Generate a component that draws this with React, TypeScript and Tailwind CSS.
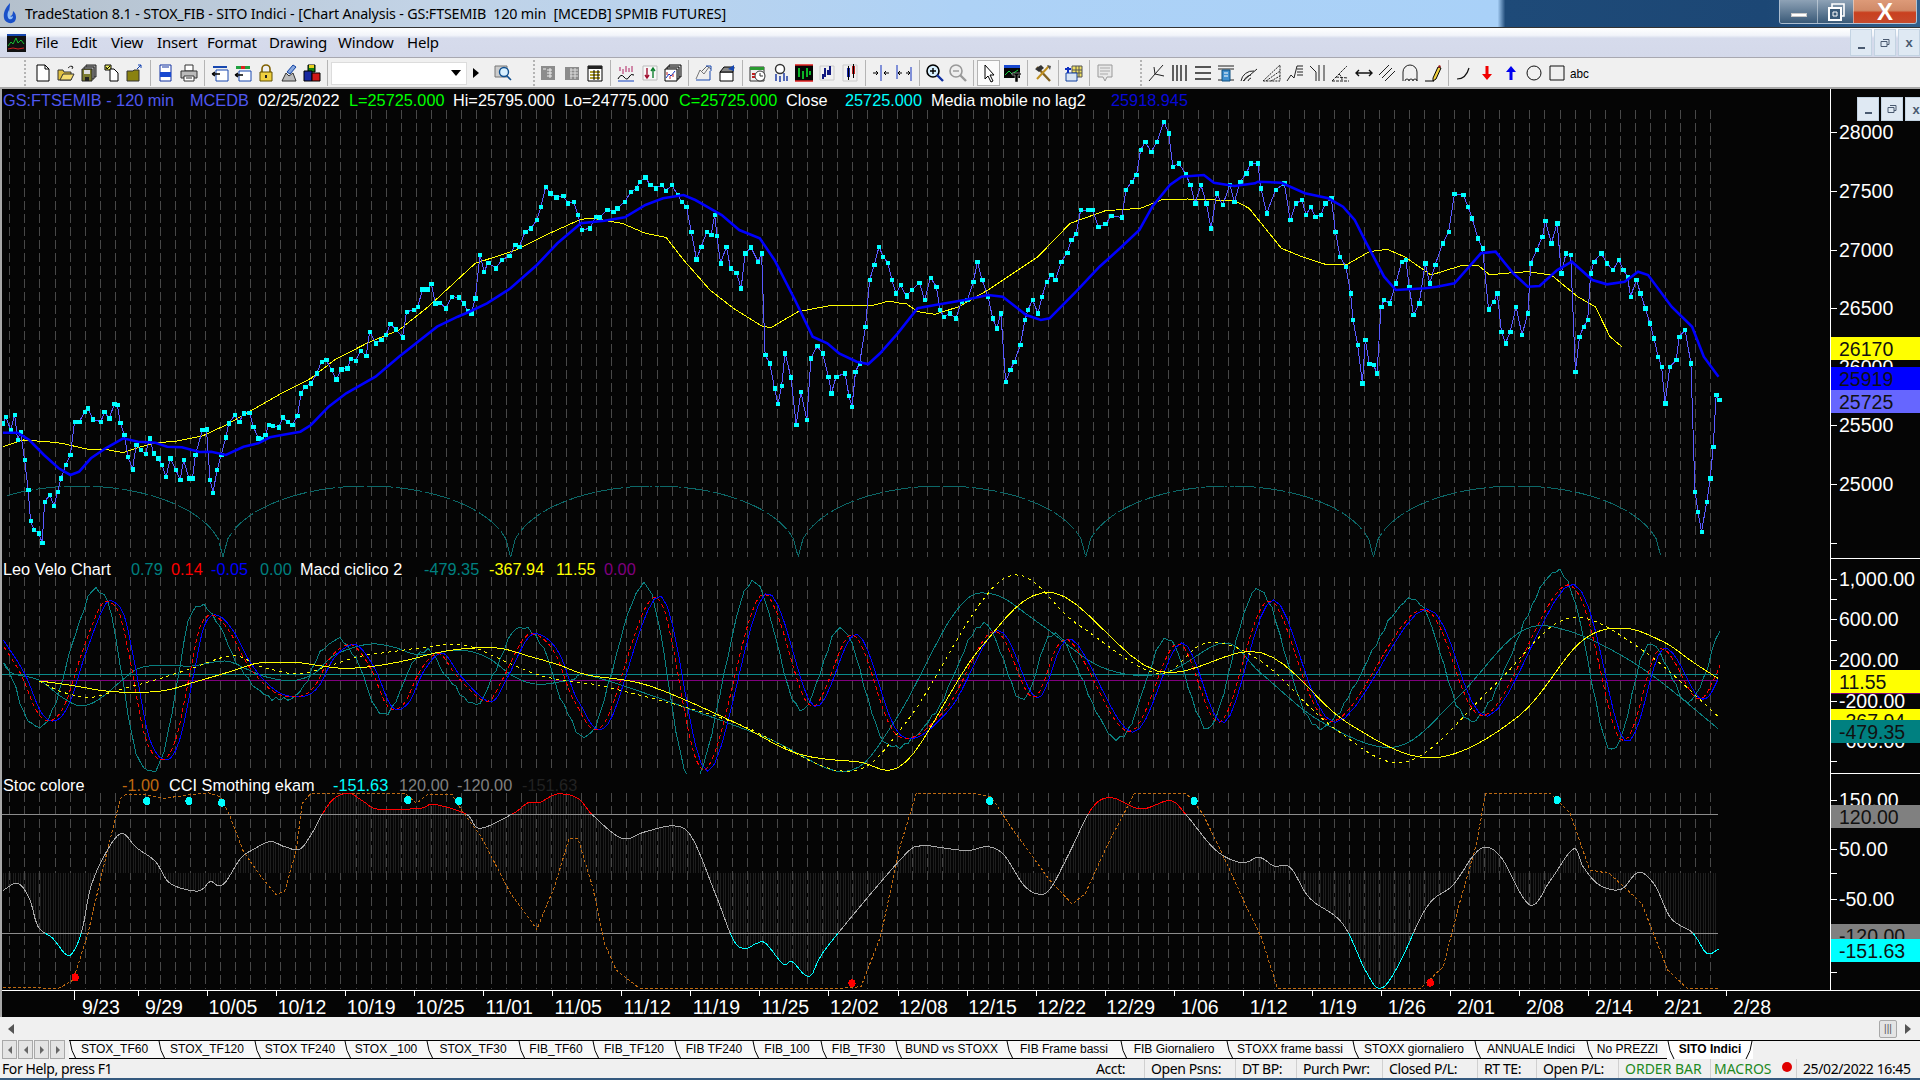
import type { ReactNode } from 'react';

type Pt = [number, number];

const parse = (s: string, f: (x: number, y: number) => Pt): Pt[] =>
  s.trim().split(/\s+/).map((p) => {
    const [x, y] = p.split(',').map(Number);
    return f(x, y);
  });

// crops of the reference are stretched differently, so each has its own mapping
const top1 = (x: number, y: number): Pt => [x / 1.7043, 100 + y / 3];
const top2 = (x: number, y: number): Pt => [900 + x / 1.7043, 100 + y / 3];
const low1 = (x: number, y: number): Pt => [x / 1.7043, 770 + y / 3];
const low2 = (x: number, y: number): Pt => [900 + x / 1.537, 770 + y / 3];
const mid1 = (x: number, y: number): Pt => [x / 2.45, 540 + y / 3];
const disp = (x: number, y: number): Pt => [x * 1.2245, y * 1.2245];

const line = (p: Pt[]) => p.map(([x, y], i) => `${i ? 'L' : 'M'}${x.toFixed(1)} ${y.toFixed(1)}`).join('');

function dense(p: Pt[]): Pt[] {
  const out: Pt[] = [];
  for (let i = 0; i < p.length - 1; i++) {
    const a = p[Math.max(0, i - 1)], b = p[i], c = p[i + 1], d = p[Math.min(p.length - 1, i + 2)];
    for (let k = 0; k < 8; k++) {
      const t = k / 8, t2 = t * t, t3 = t2 * t;
      const f = (j: 0 | 1) =>
        0.5 * (2 * b[j] + (c[j] - a[j]) * t + (2 * a[j] - 5 * b[j] + 4 * c[j] - d[j]) * t2 + (3 * b[j] - a[j] - 3 * c[j] + d[j]) * t3);
      out.push([f(0), f(1)]);
    }
  }
  out.push(p[p.length - 1]);
  return out;
}

function at(p: Pt[], x: number) {
  if (x <= p[0][0]) return p[0][1];
  for (let i = 1; i < p.length; i++) {
    if (p[i][0] >= x) {
      const d = p[i][0] - p[i - 1][0] || 1;
      return p[i - 1][1] + ((x - p[i - 1][0]) / d) * (p[i][1] - p[i - 1][1]);
    }
  }
  return p[p.length - 1][1];
}

const price: Pt[] = [
  ...parse(`5,970 10,950 18,990 25,945 30,1020 35,995 42,1080 48,1170 52,1262 58,1290 66,1300 72,1328 76,1205 85,1185 92,1218 98,1175 104,1135 112,1095 120,1065 127,965 135,965 145,935 150,925 158,958 172,965 178,935 186,955 195,912 200,915 205,968 212,1005 218,1070 226,1108 232,1035 240,1050 248,1062 255,1015 262,1060 270,1075 276,1095 283,1130 290,1075 300,1110 307,1140 313,1080 322,1135 328,1135 333,1065 345,990 352,988 358,1140 363,1178 370,1110 377,1065 385,1012 390,970 400,945 408,965 415,940 425,938 432,980 440,1015 446,1018 452,1005 458,975 465,978 475,982 482,952 490,965 498,975 507,948 513,880 520,860 530,850 540,820 548,785 556,780 565,810 573,838 582,808 592,805 598,777 606,782 615,752 624,768 630,695 640,730 650,720 658,705 665,672 675,688 686,712 693,635 705,630 712,620 720,568 728,568 735,552 742,610 750,608 760,625 770,590 782,592 790,610 797,632 803,640 810,595 818,465 825,515 832,488 845,505 855,480 868,468 878,435 885,440 895,395 905,385 915,360 922,320 930,260 938,280 948,292 960,288 968,310 978,305 985,345 992,390 1005,385 1015,350 1022,352 1035,330 1045,335 1052,325 1065,305 1075,275 1085,265 1090,245 1100,232 1108,255 1118,265 1128,255 1135,272 1145,255 1155,285 1162,305 1170,320 1178,395 1187,478 1195,440 1205,395 1212,405 1218,345 1222,408 1228,490 1238,440 1245,505 1255,518 1263,565 1270,460 1280,442 1292,485 1298,460 1304,765 1312,790 1320,865 1326,912 1332,858 1338,760 1348,832 1357,975 1365,875 1375,960 1382,775 1393,738 1402,760 1412,830 1417,880 1425,830 1440,820 1447,888 1452,920 1458,815 1465,790 1475,680 1482,540 1490,495 1498,440 1505,470 1513,488 1520,540 1527,580 1535,555 1545,590`, top1),
  ...parse(`12,585 20,570 33,548 42,600 52,533 62,560 68,630 75,650 85,640 95,655 105,605 115,600 125,545 132,485 140,540 150,590 158,655 165,685 172,640 180,845 188,810 195,785 205,735 213,660 218,630 226,600 235,640 242,590 250,545 258,525 265,540 275,485 285,458 292,420 300,402 308,330 320,330 328,330 338,380 350,372 360,348 378,352 385,270 395,245 403,225 410,150 418,125 428,155 438,125 450,65 458,100 465,200 475,190 487,222 495,255 503,310 513,255 522,310 530,385 540,280 550,315 562,255 570,305 580,245 590,220 598,190 610,190 615,265 625,340 640,270 655,250 665,360 675,310 685,300 692,345 700,320 708,350 717,345 725,310 735,295 742,395 750,470 760,500 768,580 772,660 780,735 788,850 793,720 800,792 807,795 813,820 820,620 825,600 835,610 845,550 855,485 862,480 868,560 875,645 885,610 895,490 903,550 912,495 925,430 935,395 945,282 960,285 968,320 975,355 985,415 993,445 1003,628 1012,605 1018,580 1025,695 1032,730 1040,695 1050,620 1060,705 1070,640 1075,490 1085,450 1095,410 1100,362 1110,430 1120,370 1127,520 1135,460 1143,465 1151,815 1158,710 1165,680 1172,660 1177,520 1183,485 1195,460 1205,490 1215,510 1225,480 1233,510 1240,530 1245,590 1255,540 1262,580 1270,625 1278,670 1285,715 1292,770 1298,800 1304,910 1312,800 1323,780 1328,710 1338,690 1348,790 1355,1175 1360,1235 1366,1295 1375,1205 1381,1135 1386,1040 1391,885 1396,900`, top2),
];

const maBlue: Pt[] = [
  ...parse(`5,998 30,998 50,1020 75,1065 100,1105 120,1125 135,1115 155,1075 180,1045 210,1015 235,1025 265,1028 285,1040 310,1042 340,1056 360,1055 385,1065 415,1040 440,1030 460,1012 490,1002 512,995 530,975 560,920 590,880 640,830 680,770 745,680 780,650 800,635 830,610 870,565 915,495 950,430 990,370 1030,362 1065,352 1100,315 1130,295 1165,285 1185,300 1210,325 1230,345 1260,390 1295,415 1320,480 1355,600 1385,710 1410,730 1430,760 1460,785 1480,792 1500,760 1530,700`, top1),
  ...parse(`30,625 60,615 110,600 150,585 175,590 215,645 240,660 255,655 300,575 340,500 375,445 408,390 430,320 460,255 480,230 518,225 535,248 570,258 605,250 610,245 650,248 690,280 730,295 755,320 775,360 795,430 825,530 845,570 895,565 915,560 945,550 990,460 1015,455 1045,520 1070,560 1090,558 1120,510 1145,485 1180,540 1205,553 1235,545 1258,515 1275,525 1315,620 1350,680 1370,770 1395,830`, top2),
];

const maYellow: Pt[] = [
  ...parse(`5,1040 40,1020 80,1025 105,1030 150,1048 180,1048 210,1058 240,1040 270,1027 295,1025 345,1008 385,975 430,930 480,880 530,835 570,780 625,730 680,690 730,620 770,555 810,490 880,450 930,405 990,358 1010,355 1060,370 1100,400 1135,412 1165,480 1210,570 1250,625 1300,680 1315,682 1360,635 1420,615 1490,615 1515,603 1535,610`, top1),
  ...parse(`10,610 30,635 60,643 100,620 150,570 235,470 290,370 350,332 410,325 445,300 490,297 570,302 595,325 650,445 685,470 725,493 760,495 800,455 830,448 860,470 905,525 960,495 985,495 1005,525 1030,520 1070,515 1110,525 1155,590 1185,620 1210,710 1230,740`, top2),
];

const oscBlue: Pt[] = [
  ...parse(`8,300 60,400 100,515 135,542 170,490 210,340 255,200 280,187 305,230 330,370 365,590 405,660 440,600 475,400 500,260 530,225 570,270 620,380 680,455 740,470 780,440 815,360 850,320 880,320 920,390 960,500 1000,490 1040,390 1085,340 1130,410 1200,485 1240,420 1290,300 1325,285 1370,340 1420,490 1490,552`, mid1),
  ...parse(`540,487 578,630 625,485 665,577 700,518 735,600 775,580 815,515 847,570 875,522 925,598 965,525 1000,590 1040,490 1090,590 1165,497 1215,585 1285,477 1327,605 1358,530 1388,570 1403,555 1415,521`, disp),
];

const oscSlow: Pt[] = [
  ...parse(`8,368 30,400 95,420 150,470 195,497 240,480 300,420 340,385 400,375 470,378 550,363 600,385 650,410 715,422 770,400 820,345 900,313 960,320 1030,345 1120,330 1190,350 1260,410 1320,433 1400,420 1470,415`, mid1),
  ...parse(`620,600 690,630 730,590 780,500 810,485 850,510 900,545 950,550 1000,525 1030,550 1080,590 1140,610 1190,570 1240,517 1280,515 1340,545 1403,595`, disp),
];

const yellowSolid: Pt[] = [
  ...parse(`97,423 170,435 260,453 340,457 410,450 480,425 550,400 620,373 660,367 730,368 800,380 850,385 920,378 1000,360 1070,338 1150,325 1225,325 1300,350 1370,375 1440,405`, mid1),
  ...parse(`530,560 600,590 650,615 700,622 740,622 800,530 860,484 945,548 1030,533 1100,590 1170,619 1240,585 1290,525 1325,513 1358,524 1383,541 1403,554`, disp),
];

const yellowDash: Pt[] = [
  ...parse(`97,423 150,455 220,472 290,450 380,420 470,385 570,347 640,380 730,402 800,380 880,350 960,335 1040,322 1100,313 1160,322 1230,360 1320,405 1400,425 1500,445`, mid1),
  ...parse(`600,590 690,630 740,590 820,472 880,510 945,550 985,525 1030,540 1090,595 1150,622 1220,560 1280,505 1340,530 1403,585`, disp),
];

const cci: Pt[] = [
  ...parse(`5,362 30,340 50,385 65,470 90,505 112,553 125,545 140,480 155,350 180,250 207,190 232,232 265,275 290,340 337,363 358,335 372,347 385,335 410,265 430,240 460,215 485,230 510,238 530,195 550,130 570,85 595,70 620,95 645,118 715,115 740,103 795,133 818,175 875,130 900,98 920,97 950,72 985,85 1010,135 1060,205 1100,185 1150,168 1180,205 1220,375 1250,510 1270,535 1290,520 1305,520 1335,583 1350,575 1380,618 1410,530`, low1),
  ...parse(`0,270 30,228 60,232 90,240 110,240 135,230 160,255 190,345 215,373 233,350 260,250 295,115 325,83 370,117 415,92 440,135 485,240 525,278 552,262 575,288 600,293 630,385 680,460 715,600 738,655 765,590 810,410 850,345 880,260 900,232 925,265 968,405 1000,330 1035,237 1050,290 1075,345 1108,358 1135,307 1160,345 1185,445 1218,488 1240,550 1258,537`, low2),
].filter((p, i, a) => i === 0 || p[0] > a[i - 1][0]);

const stoc: Pt[] = [
  ...parse(`5,652 100,655 125,630 150,490 175,300 205,85 215,72 240,72 280,85 320,75 355,68 375,80 390,130 415,245 445,320 470,373 485,365 505,240 515,100 530,70 690,70 710,100 730,72 770,72 790,130 820,200 870,370 915,478 945,350 970,205 985,205 1010,350 1030,520 1050,600 1090,655`, low1),
  ...parse(`-90,655 -60,650 -30,500 0,230 25,70 110,70 140,80 170,170 230,330 265,403 285,370 320,220 360,72 440,70 465,130 495,250 530,400 555,500 580,655 800,655 835,590 860,400 885,230 900,72 1000,70 1030,130 1060,300 1090,310 1140,400 1180,600 1210,655 1258,655`, low2),
];

const cyanDots: Pt[] = [
  ...parse('250,93 322,93 378,98 695,90 782,93', low1),
  ...parse('138,93 452,93 1010,90', low2),
];
const redDots: Pt[] = [low1(128, 622), low1(1452, 640), low2(815, 638)];

const gridXs = Array.from({ length: 114 }, (_, i) => Math.round(1710 - i * 15.05) + 0.5);

function Grid({ y1, y2 }: { y1: number; y2: number }) {
  return (
    <g stroke="#484848" strokeDasharray="9 4">
      {gridXs.map((x) => <line key={x} x1={x} x2={x} y1={y1} y2={y2} />)}
    </g>
  );
}

function Arcs() {
  const P = 287.6, x0 = 223 - P;
  const arcs: string[] = [];
  for (let k = 0; k < 6; k++) {
    const pts: Pt[] = [];
    for (let i = 0; i <= 60; i++) {
      const t = i / 60;
      const x = x0 + (k + t) * P;
      if (x < 3 || x > 1825) continue;
      pts.push([x, 557 - 71 * Math.sqrt(Math.max(0, 1 - (2 * t - 1) ** 2))]);
    }
    if (pts.length) arcs.push(line(pts));
  }
  return <g fill="none" stroke="#0c6868" strokeDasharray="26 3">{arcs.map((d) => <path key={d} d={d} />)}</g>;
}

function AxisText({ y, children, fill = '#fff' }: { y: number; children: string; fill?: string }) {
  return <text x={1839} y={y + 7} fontSize={19.5} fill={fill}>{children}</text>;
}

function Tag({ y, bg, children }: { y: number; bg: string; children: string }) {
  return (
    <g>
      <rect x={1831} y={y} width={89} height={23} fill={bg} />
      <text x={1839} y={y + 18.5} fontSize={19.5} fill="#111">{children}</text>
    </g>
  );
}

function Ticks({ ys }: { ys: number[] }) {
  return <g stroke="#fff">{ys.map((y) => <line key={y} x1={1830} x2={1837} y1={y + 0.5} y2={y + 0.5} />)}</g>;
}

function PricePanel() {
  return (
    <svg viewBox="2 89 1918 470" shapeRendering="crispEdges" className="block w-[1918px] h-[470px] shrink-0">
      <Grid y1={110} y2={557} />
      <Arcs />
      <path d={line(maYellow)} fill="none" stroke="#ffff00" />
      <path d={line(price)} fill="none" stroke="#5a5aff" />
      {price.map(([x, y], i) => <rect key={i} x={x - 2} y={y - 2} width={4.4} height={4.4} fill="#00ffff" />)}
      <path d={line(maBlue)} fill="none" stroke="#0000ff" strokeWidth={2.6} shapeRendering="auto" />
      <line x1={1830.5} x2={1830.5} y1={89} y2={559} stroke="#fff" />
      <Ticks ys={[132, 191, 250, 308, 367, 425, 484, 543]} />
      {[['28000', 132], ['27500', 191], ['27000', 250], ['26500', 308], ['26000', 367], ['25500', 425], ['25000', 484]].map(([t, y]) => (
        <AxisText key={t} y={y as number}>{t as string}</AxisText>
      ))}
      <Tag y={337} bg="#ffff00">26170</Tag>
      <Tag y={367} bg="#0000ff">25919</Tag>
      <Tag y={390} bg="#6666ff">25725</Tag>
      <line x1={1830} x2={1920} y1={558.5} y2={558.5} stroke="#fff" />
    </svg>
  );
}

function MacdPanel() {
  const blue = dense([...oscBlue, [1733, 638]]);
  const blueLine = blue.filter((p) => p[0] <= 1718);
  const xs = Array.from({ length: 430 }, (_, i) => 4 + i * 4);
  const red: Pt[] = xs.map((x) => [x, at(blue, x + 4)]);
  const teal: Pt[] = xs.map((x) => [x, 680 + (at(blue, x + 15) - 680) * 1.15 + Math.sin(x * 0.7) * 1.6 + Math.sin(x * 1.9) * 0.9]);
  return (
    <svg viewBox="2 559 1918 215" shapeRendering="crispEdges" className="block w-[1918px] h-[215px] shrink-0">
      <Grid y1={577} y2={771} />
      <line x1={2} x2={1718} y1={674.5} y2={674.5} stroke="#0a8a8a" />
      <line x1={40} x2={1718} y1={680.5} y2={680.5} stroke="#800080" />
      <path d={line(dense(oscSlow))} fill="none" stroke="#0a8080" />
      <path d={line(teal)} fill="none" stroke="#0a8080" />
      <path d={line(blueLine)} fill="none" stroke="#0000ff" />
      <path d={line(red)} fill="none" stroke="#ff0000" strokeDasharray="4 3" />
      <path d={line(dense(yellowDash))} fill="none" stroke="#ffff00" strokeDasharray="3 4" />
      <path d={line(dense(yellowSolid))} fill="none" stroke="#ffff00" />
      <line x1={1830.5} x2={1830.5} y1={559} y2={774} stroke="#fff" />
      <Ticks ys={[579, 599, 619, 640, 660, 701, 741, 761]} />
      {[['1,000.00', 579], ['600.00', 619], ['200.00', 660], ['-200.00', 701], ['-600.00', 741]].map(([t, y]) => (
        <AxisText key={t} y={y as number}>{t as string}</AxisText>
      ))}
      <Tag y={670} bg="#ffff00">11.55</Tag>
      <line x1={1831} x2={1920} y1={693.5} y2={693.5} stroke="#800080" />
      <Tag y={709} bg="#ffff00">-367.94</Tag>
      <Tag y={720} bg="#008080">-479.35</Tag>
      <line x1={1830} x2={1920} y1={773.5} y2={773.5} stroke="#fff" />
    </svg>
  );
}

function StocPanel() {
  const curve = dense(cci);
  const path = line(curve);
  const hist = Array.from({ length: 686 }, (_, i) => 3 + i * 2.5);
  return (
    <svg viewBox="2 774 1918 216" shapeRendering="crispEdges" className="block w-[1918px] h-[216px] shrink-0">
      <defs>
        <clipPath id="cciHigh"><rect x={0} y={770} width={1830} height={44} /></clipPath>
        <clipPath id="cciMid"><rect x={0} y={814} width={1830} height={119} /></clipPath>
        <clipPath id="cciLow"><rect x={0} y={933} width={1830} height={60} /></clipPath>
      </defs>
      <Grid y1={793} y2={989} />
      <g stroke="#1e1e1e">{hist.map((x) => <line key={x} x1={x} x2={x} y1={873} y2={at(curve, x)} />)}</g>
      <line x1={2} x2={1718} y1={814.5} y2={814.5} stroke="#8c8c8c" />
      <line x1={2} x2={1718} y1={933.5} y2={933.5} stroke="#8c8c8c" />
      <path d={line(stoc)} fill="none" stroke="#c06a10" strokeDasharray="3 2" />
      <path d={path} fill="none" stroke="#ff0000" clipPath="url(#cciHigh)" />
      <path d={path} fill="none" stroke="#a8a8a8" clipPath="url(#cciMid)" />
      <path d={path} fill="none" stroke="#00ffff" clipPath="url(#cciLow)" />
      {cyanDots.map(([x, y]) => <ellipse key={x} cx={x} cy={y} rx={3.6} ry={4} fill="#00ffff" />)}
      {redDots.map(([x, y]) => <ellipse key={x} cx={x} cy={y} rx={3.6} ry={4} fill="#ff0000" />)}
      <line x1={1830.5} x2={1830.5} y1={774} y2={990} stroke="#fff" />
      <Ticks ys={[800, 849, 873, 899, 972]} />
      <AxisText y={800}>150.00</AxisText>
      <AxisText y={849}>50.00</AxisText>
      <AxisText y={899}>-50.00</AxisText>
      <Tag y={805} bg="#808080">120.00</Tag>
      <Tag y={924} bg="#808080">-120.00</Tag>
      <Tag y={939} bg="#00ffff">-151.63</Tag>
    </svg>
  );
}

const dates: [string, number][] = [
  ['9/23', 101], ['9/29', 164],
  ...['10/05', '10/12', '10/19', '10/25', '11/01', '11/05', '11/12', '11/19', '11/25', '12/02', '12/08', '12/15', '12/22', '12/29', '1/06', '1/12', '1/19', '1/26', '2/01', '2/08', '2/14', '2/21', '2/28'].map(
    (d, i): [string, number] => [d, 233 + i * 69.05],
  ),
];

function DateAxis() {
  return (
    <svg viewBox="2 990 1918 27" shapeRendering="crispEdges" className="block w-[1918px] h-[27px] shrink-0">
      <line x1={2} x2={1920} y1={990.5} y2={990.5} stroke="#fff" />
      <line x1={74} x2={74} y1={990} y2={1000} stroke="#fff" />
      {dates.slice(1).map(([d, x]) => (
        <line key={d} x1={Math.round(x - 26) + 0.5} x2={Math.round(x - 26) + 0.5} y1={990} y2={996} stroke="#fff" />
      ))}
      {dates.map(([d, x]) => (
        <text key={d} x={x} y={1014} textAnchor="middle" fontSize={19.5} fill="#fff">{d}</text>
      ))}
    </svg>
  );
}

function MiniButtons({ className }: { className: string }) {
  return (
    <div className={`flex gap-[2px] ${className}`}>
      <div className="w-[22px] h-full bg-[#dfe9f3] border border-[#c3d3e2] flex items-end justify-center pb-[6px]"><div className="w-[7px] h-[2px] bg-[#4a5a70]" /></div>
      <div className="w-[22px] h-full bg-[#dfe9f3] border border-[#c3d3e2] flex items-center justify-center">
        <svg viewBox="0 0 10 10" className="w-[10px] h-[10px]"><path d="M3 1.500h6v5H7M1 3.500h6v5H1z" fill="none" stroke="#4a5a70" /></svg>
      </div>
      <div className="w-[22px] h-full bg-[#dfe9f3] border border-[#c3d3e2] flex items-center justify-center text-[#4a5a70] text-[13px] font-bold leading-none">x</div>
    </div>
  );
}

function ChartWindow() {
  return (
    <div className="relative flex flex-col w-[1920px] h-[928px] shrink-0 bg-[#050505] border-l-2 border-[#a8a8a8] overflow-hidden">
      <PricePanel />
      <MacdPanel />
      <StocPanel />
      <DateAxis />
      <div className="absolute left-[1px] top-0 flex items-center h-[22px] text-[16.3px] whitespace-pre">
        <span className="w-[187px] text-[#5058f0]">GS:FTSEMIB - 120 min</span>
        <span className="w-[68px] text-[#5058f0]">MCEDB</span>
        <span className="w-[91px] text-white">02/25/2022</span>
        <span className="w-[104px] text-[#00ff00]">L=25725.000</span>
        <span className="w-[111px] text-white">Hi=25795.000</span>
        <span className="w-[115px] text-white">Lo=24775.000</span>
        <span className="w-[107px] text-[#00ff00]">C=25725.000</span>
        <span className="w-[59px] text-white">Close</span>
        <span className="w-[86px] text-[#00ffff]">25725.000</span>
        <span className="w-[180px] text-white">Media mobile no lag2</span>
        <span className="text-[#0808d8]">25918.945</span>
      </div>
      <div className="absolute left-[1px] top-[470px] flex items-center h-[20px] text-[16.3px] whitespace-pre">
        <span className="w-[128px] text-white">Leo Velo Chart</span>
        <span className="w-[40px] text-[#008080]">0.79</span>
        <span className="w-[40px] text-[#ff0000]">0.14</span>
        <span className="w-[49px] text-[#0000ff]">-0.05</span>
        <span className="w-[40px] text-[#008080]">0.00</span>
        <span className="w-[124px] text-white">Macd ciclico 2</span>
        <span className="w-[65px] text-[#008080]">-479.35</span>
        <span className="w-[67px] text-[#ffff00]">-367.94</span>
        <span className="w-[48px] text-[#ffff00]">11.55</span>
        <span className="text-[#800080]">0.00</span>
      </div>
      <div className="absolute left-[1px] top-[686px] flex items-center h-[20px] text-[16.3px] whitespace-pre">
        <span className="w-[119px] text-white">Stoc colore</span>
        <span className="w-[47px] text-[#c06a10]">-1.00</span>
        <span className="w-[164px] text-white">CCI Smothing ekam</span>
        <span className="w-[66px] text-[#00ffff]">-151.63</span>
        <span className="w-[58px] text-[#808080]">120.00</span>
        <span className="w-[65px] text-[#808080]">-120.00</span>
        <span className="text-[#222222]">-151.63</span>
      </div>
      <MiniButtons className="absolute left-[1855px] top-[8px] h-[24px]" />
    </div>
  );
}

function Slot({ children, className = '' }: { children: ReactNode; className?: string }) {
  return (
    <div className={`w-[23px] h-[24px] shrink-0 flex items-center justify-center ${className}`}>
      <svg viewBox="0 0 20 20" className="w-[20px] h-[20px]">{children}</svg>
    </div>
  );
}

const Sep = () => <div className="w-[1px] h-[26px] bg-[#b4b4b4] ml-[4px] mr-[3px] shrink-0" />;
const Handle = ({ className }: { className: string }) => (
  <div className={`w-[2px] h-[26px] shrink-0 border-l-2 border-dotted border-[#b4b4b4] ${className}`} />
);

function Toolbar() {
  return (
    <div className="h-[31px] shrink-0 flex items-center bg-[#f0f0f0] pl-[24px] pt-[1px] border-b-2 border-[#a8a8a8]">
      <Handle className="mr-[5px]" />
      <Slot><path d="M4 2h8l4 4v12H4z" fill="#fff" stroke="#000" /><path d="M12 2v4h4" fill="none" stroke="#000" /></Slot>
      <Slot><path d="M2 17V7h5l1 2h7v8z" fill="#e0c040" stroke="#333" /><path d="M4 17l3-6h11l-3 6z" fill="#f5dc70" stroke="#333" /><path d="M12 5q2-3 5-1m0 0l-2-1m2 1l-1 2" fill="none" stroke="#333" /></Slot>
      <Slot><path d="M7 2h10v12H7z" fill="#999" stroke="#222" /><path d="M5 4h10v12H5z" fill="#aaa" stroke="#222" /><path d="M3 6h10v12H3z" fill="#7a7a30" stroke="#222" /><path d="M5 7h6v4H5z" fill="#ddd" /><path d="M6 14h4v4H6z" fill="#222" /></Slot>
      <Slot><path d="M3 2h6v5H3z" fill="#f0f060" stroke="#000" /><path d="M4 4l1 2 3-3" fill="none" stroke="#000" /><path d="M8 6h4l4 4v8H8z" fill="#fff" stroke="#000" /></Slot>
      <Slot><path d="M2 8h6l1-1h5v11H2z" fill="#8a8210" stroke="#333" /><path d="M12 6l4-4m0 0h-3m3 0v3" fill="none" stroke="#1040b0" /></Slot>
      <Sep />
      <Slot><path d="M4 2h11v16H4z" fill="#fff" stroke="#1030a0" /><path d="M4 9h11v5H4z" fill="#1848d0" /><path d="M6 4h7" stroke="#1030a0" /></Slot>
      <Slot><path d="M6 2h8v6H6z" fill="#fff" stroke="#333" /><path d="M2 8h16v7H2z" fill="#bbb" stroke="#333" /><path d="M5 13h10v5H5z" fill="#fff" stroke="#333" /><path d="M7 15h6" stroke="#333" /></Slot>
      <Sep />
      <Slot><path d="M3 3h14v2H3z" fill="#1848b0" /><path d="M6 7h12v11H6z" fill="#fff" stroke="#1848b0" /><path d="M2 11h8m-8 0l3-2m-3 2l3 2" fill="none" stroke="#000" strokeWidth="1.4" /></Slot>
      <Slot><path d="M3 3h14v3H3z" fill="#20a040" /><path d="M8 3h4v3H8z" fill="#e02020" /><path d="M6 8h12v10H6z" fill="#fff" stroke="#1848b0" /><path d="M2 12h8m-8 0l3-2m-3 2l3 2" fill="none" stroke="#000" strokeWidth="1.4" /></Slot>
      <Slot><path d="M6 9V6a4 4 0 018 0v3" fill="none" stroke="#806000" strokeWidth="1.6" /><path d="M4 9h12v9H4z" fill="#f0d040" stroke="#605000" /><path d="M9 12h2v3H9z" fill="#222" /></Slot>
      <Slot><path d="M3 18l4-8 3 3 4-3 3 8z" fill="#bbb" stroke="#333" /><path d="M8 9l6-7 3 2-6 7z" fill="#88a8e0" stroke="#1040a0" /></Slot>
      <Slot><path d="M6 2h7v7H6z" fill="#108010" stroke="#000" /><path d="M2 8h8v10H2z" fill="#1828a0" stroke="#000" /><path d="M10 10h8v8h-8z" fill="#d01818" stroke="#000" /><path d="M7 2h5v3H7z" fill="#e8d020" /></Slot>
      <Sep />
      <div className="w-[136px] h-[23px] shrink-0 bg-white border border-[#dcdcdc] flex items-center justify-end pr-[3px]">
        <div className="w-0 h-0 border-l-[5px] border-r-[5px] border-t-[6px] border-l-transparent border-r-transparent border-t-black mr-[2px]" />
      </div>
      <div className="w-[18px] flex justify-center shrink-0"><div className="w-0 h-0 border-t-[5px] border-b-[5px] border-l-[6px] border-t-transparent border-b-transparent border-l-black" /></div>
      <Slot className="ml-[6px]"><path d="M2 3h12v11H2z" fill="#ccc" stroke="#777" /><circle cx="11" cy="9" r="4.5" fill="#d8f0ff" stroke="#105090" strokeWidth="1.4" /><path d="M14 13l4 4" stroke="#105090" strokeWidth="1.6" /></Slot>
      <Handle className="ml-[19px] mr-[1px]" />
      <Slot><path d="M3 3h14v14H3z" fill="#8c8c8c" /><path d="M12 5v10m-3-8h5m-5 3h5m-5 3h5" stroke="#eee" /><path d="M5 6h3" stroke="#eee" /></Slot>
      <Slot className="ml-[1px]"><path d="M3 4h14v13H3z" fill="#8c8c8c" /><path d="M8 7h8m-8 3h8m-8 3h8M9 5v11m4-11v11" stroke="#ddd" /></Slot>
      <Slot><path d="M3 3h14v15H3z" fill="#fff" stroke="#000" /><path d="M3 3h14v3H3z" fill="#222" /><path d="M5 8h10v2H5zm0 3h10v2H5zm0 3h10v2H5z" fill="#b0a030" /><path d="M9 7v10m4-10v10" stroke="#000" /></Slot>
      <Sep />
      <Slot><path d="M4 8V4m3 7V6m3 3V3m3 6V5m3 4V3" stroke="#b02060" /><path d="M2 16q3-6 6-2t5 0 5-2" fill="none" stroke="#000" /><path d="M2 18h16" stroke="#1040c0" /></Slot>
      <Slot className="ml-[1px]"><path d="M3 3h14v14H3z" fill="#f8f8f8" stroke="#bbb" /><path d="M7 5v9m-2-2l2 3 2-3" fill="none" stroke="#a01030" strokeWidth="1.4" /><path d="M13 15V6m-2 2l2-3 2 3" fill="none" stroke="#108030" strokeWidth="1.4" /></Slot>
      <Slot><path d="M6 2h12v12H6z" fill="#ddd" stroke="#000" /><path d="M4 4h12v12H4z" fill="#ccc" stroke="#000" /><path d="M2 6h12v12H2z" fill="#fff" stroke="#000" /><path d="M3 15l3-4 2 2 4-5" fill="none" stroke="#1030c0" /><path d="M4 9v3m3 1v3m3-5v3" stroke="#c02020" /></Slot>
      <Sep />
      <Slot><path d="M2 16l4-9 4 4 5-7" fill="none" stroke="#777" /><path d="M2 17h14V8" fill="#eee" stroke="#1848b0" /><path d="M8 8l5-5 4 3" fill="none" stroke="#666" /><path d="M12 3h5v5" fill="none" stroke="#1848b0" /></Slot>
      <Slot><path d="M3 9h13v9H3z" fill="#fff" stroke="#000" /><path d="M3 9l4-5h10l-1 5z" fill="#888" stroke="#000" /><path d="M11 6l6-4v6z" fill="#1848b0" /></Slot>
      <Sep />
      <Slot><path d="M2 4h14v14H2z" fill="#eee" stroke="#333" /><path d="M2 4h14v3H2z" fill="#2a9a30" /><circle cx="12" cy="13" r="5" fill="#fff" stroke="#333" /><path d="M12 10v3h3" fill="none" stroke="#333" /><path d="M4 10h3v2H4zm0 3h3v2H4z" fill="#c02020" /></Slot>
      <Slot><circle cx="9" cy="6" r="4.5" fill="#fff" stroke="#333" strokeWidth="1.4" /><path d="M5 11v7m4-5v6m4-9v8m3-5v5" stroke="#1030a0" strokeWidth="1.4" /></Slot>
      <Slot><path d="M1 2h18v16H1z" fill="#050505" /><path d="M1 2h18M1 18h18" stroke="#e02020" strokeWidth="1.6" /><path d="M5 5v9m4-6v8m4-11v9m3-6v4" stroke="#10e030" strokeWidth="1.6" /></Slot>
      <Slot><path d="M3 3h14v14H3z" fill="#f0f0f0" stroke="#ccc" /><path d="M8 5v9m5-11v9M6 11v5m5-9v5" stroke="#101880" strokeWidth="2" /></Slot>
      <Slot><path d="M3 2h14v16H3z" fill="#f0f0f0" stroke="#ccc" /><path d="M7 5h3v9H7z" fill="#1828a8" /><path d="M12 3h3v8h-3z" fill="#c02020" /><path d="M8.500 3v14m5-16v14" stroke="#000" /></Slot>
      <Sep />
      <Slot><path d="M10 2v16" stroke="#1030c0" /><path d="M2 10h5m-2-2l2 2-2 2m13-2h-5m2-2l-2 2 2 2" fill="none" stroke="#000" /></Slot>
      <Slot><path d="M3 2v14M17 4v14" stroke="#1030c0" /><path d="M8 10H4m2-2l-2 2 2 2m6-2h4m-2-2l2 2-2 2" fill="none" stroke="#000" /></Slot>
      <Sep />
      <Slot><circle cx="8" cy="8" r="6" fill="#d8f0ff" stroke="#000" strokeWidth="1.6" /><path d="M12 12l6 6" stroke="#1030a0" strokeWidth="2.4" /><path d="M5 8h6M8 5v6" stroke="#000" strokeWidth="1.4" /></Slot>
      <Slot><circle cx="8" cy="8" r="6" fill="#eee" stroke="#999" strokeWidth="1.6" /><path d="M12 12l6 6" stroke="#999" strokeWidth="2.4" /><path d="M5 8h6" stroke="#999" strokeWidth="1.4" /></Slot>
      <Sep />
      <div className="w-[23px] h-[26px] shrink-0 flex items-center justify-center bg-[#fbfbfb] border border-[#b4b4b4]">
        <svg viewBox="0 0 20 20" className="w-[20px] h-[20px]"><path d="M6 2v14l3-3 3 6 2-1-3-6h4z" fill="#fff" stroke="#000" /></svg>
      </div>
      <Slot><path d="M2 2h16v13H2z" fill="#050505" /><path d="M2 2h16v3H2z" fill="#1848d0" /><path d="M3 12l4-4 3 3 6-4" fill="none" stroke="#10d040" /><path d="M10 10h9v2h-3v7h-3v-7h-3z" fill="#000" stroke="#eee" strokeWidth=".5" /></Slot>
      <Sep />
      <Slot><path d="M4 4l13 14" stroke="#806020" strokeWidth="2.4" /><path d="M2 6l6-4 3 3-5 4z" fill="#333" /><path d="M16 3l-12 13" stroke="#c09020" strokeWidth="2" /><path d="M14 2l4 1-1 4z" fill="#555" /></Slot>
      <Sep />
      <Slot><path d="M8 3h10v11H8z" fill="#f0e060" stroke="#555" /><path d="M8 7h10M8 10h10M12 3v11m3-11v11" stroke="#555" /><path d="M2 10h11v8H2z" fill="#d8e4f4" stroke="#1040a0" /><path d="M4 4v6M1 6h6" stroke="#1030c0" strokeWidth="2" /></Slot>
      <Sep />
      <Slot><path d="M3 2h14v12h-5l-2 4-2-4H3z" fill="#e8e8e8" stroke="#999" /><path d="M5 5h10M5 8h10M5 11h8" stroke="#aaa" /></Slot>
      <Handle className="ml-[24px] mr-[3px]" />
      <Slot><path d="M2 18l6-7 8-9M8 11l9 2M7 4l1 7" fill="none" stroke="#222" /></Slot>
      <Slot><path d="M3 2v16m4-16v16m4-16v16m5-16v16" stroke="#222" strokeWidth="1.4" /></Slot>
      <Slot><path d="M2 4h16M2 10h16M2 16h16" stroke="#222" strokeWidth="1.5" /></Slot>
      <Slot><path d="M2 3h16M2 6h16M2 17h16" stroke="#222" /><path d="M6 7h8v11H6z" fill="#4090d0" stroke="#105080" /><path d="M8 10h4m-4 3h4" stroke="#fff" /></Slot>
      <Slot><path d="M2 18a12 12 0 0113-10M5 18a9 9 0 017-6M9 18a5 5 0 013-3M4 18L18 6" fill="none" stroke="#222" /></Slot>
      <Slot><path d="M1 18L18 2v16zM4 18L18 8M9 18l9-5" fill="none" stroke="#222" strokeDasharray="2 1" /></Slot>
      <Slot><path d="M2 18l4-6 3 3 3-12" fill="none" stroke="#222" /><path d="M12 3h6M12 6h6M12 9h6M12 12h6" stroke="#222" /></Slot>
      <Slot><path d="M2 3l6 6v9M11 2v16m5-16v16" fill="none" stroke="#222" /></Slot>
      <Slot><path d="M1 18L16 3M1 18h17M5 14l12 1M8 11a8 8 0 013 7" fill="none" stroke="#222" strokeDasharray="3 1" /></Slot>
      <Slot><path d="M2 10h16m-13-3l-3 3 3 3m10-6l3 3-3 3" fill="none" stroke="#111" strokeWidth="1.4" /></Slot>
      <Slot><path d="M2 12L12 2M5 15L15 5M8 18L18 8" stroke="#222" /></Slot>
      <Slot><path d="M3 18V9a7 7 0 0114 0v9M5 18a2 2 0 014 0M9 18a2 2 0 014 0M13 18a2 2 0 014 0" fill="none" stroke="#222" /></Slot>
      <Slot><path d="M2 18h9" stroke="#000" /><path d="M10 15l5-11 3 1-5 11-3 2z" fill="#f0d040" stroke="#000" /><path d="M15 4l1-2 2 1-1 2z" fill="#a02020" /></Slot>
      <Sep />
      <Slot><path d="M3 16q9 0 12-11" fill="none" stroke="#111" strokeWidth="1.2" /></Slot>
      <Slot><path d="M8.500 3h3v8H15l-5 6-5-6h3.500z" fill="#f00000" /></Slot>
      <Slot className="ml-[1px]"><path d="M10 3l5 6h-3.500v8h-3V9H5z" fill="#0000f0" /></Slot>
      <Slot><circle cx="10" cy="10" r="7" fill="none" stroke="#111" /></Slot>
      <Slot><path d="M3 3h14v14H3z" fill="none" stroke="#111" /></Slot>
      <div className="w-[23px] shrink-0 text-center text-[13px] leading-none text-black scale-x-90">abc</div>
    </div>
  );
}

const tabs = [
  ['STOX_TF60', 'w-[89px]'], ['STOX_TF120', 'w-[96px]'], ['STOX TF240', 'w-[90px]'], ['STOX _100', 'w-[82px]'], ['STOX_TF30', 'w-[92px]'],
  ['FIB_TF60', 'w-[74px]'], ['FIB_TF120', 'w-[82px]'], ['FIB TF240', 'w-[78px]'], ['FIB_100', 'w-[68px]'], ['FIB_TF30', 'w-[75px]'],
  ['BUND vs STOXX', 'w-[111px]'], ['FIB Frame bassi', 'w-[114px]'], ['FIB Giornaliero', 'w-[106px]'], ['STOXX frame bassi', 'w-[126px]'],
  ['STOXX giornaliero', 'w-[122px]'], ['ANNUALE Indici', 'w-[112px]'], ['No PREZZI', 'w-[81px]'],
];

const Slash = () => (
  <svg viewBox="0 0 8 18" className="w-[8px] h-[18px] shrink-0"><path d="M1 0q1 10 6 18" fill="none" stroke="#000" /></svg>
);

function TabBar() {
  return (
    <div className="h-[19px] shrink-0 flex items-stretch bg-[#f0f0f0] text-[12px] leading-[17px] text-black">
      <div className="flex items-stretch w-[69px] shrink-0 pl-[2px] gap-[1px]">
        {['M6 2v8L2 6z', 'M6 2v8L2 6z', 'M2 2v8l4-4z', 'M2 2v8l4-4z'].map((d, i) => (
          <div key={i} className="w-[15px] bg-[#e4e4e4] border border-[#a8a8a8] flex items-center justify-center">
            <svg viewBox="0 0 8 12" className="w-[8px] h-[12px]"><path d={d} fill="#666" /></svg>
          </div>
        ))}
      </div>
      {tabs.map(([t, w]) => (
        <div key={t} className={`flex items-stretch bg-[#f8f8f8] border-y border-black shrink-0 ${w}`}>
          <Slash />
          <span className="flex-1 text-center whitespace-pre pr-[6px]">{t}</span>
        </div>
      ))}
      <div className="flex items-stretch w-[86px] shrink-0 bg-white border-b border-white border-t border-t-black">
        <Slash />
        <span className="flex-1 text-center font-bold whitespace-pre">SITO Indici</span>
        <svg viewBox="0 0 8 18" className="w-[8px] h-[18px] shrink-0"><path d="M7 0q-1 10-6 18" fill="none" stroke="#000" /></svg>
      </div>
      <div className="flex-1 border-t border-black ml-[-1px]" />
    </div>
  );
}

function StatusBar() {
  const cell = 'h-full border-l border-[#d0d0d0] pl-[6px] shrink-0 whitespace-pre';
  return (
    <div className="h-[19px] shrink-0 flex items-center bg-[#f0f0f0] text-[14px] leading-[19px] text-black font-['Noto_Sans','Liberation_Sans',sans-serif] tracking-[-0.4px] overflow-hidden">
      <div className="w-[1092px] shrink-0 pl-[2px]">For Help, press F1</div>
      <div className="h-full w-[52px] shrink-0 pl-[4px]">Acct:</div>
      <div className={`${cell} w-[91px]`}>Open Psns:</div>
      <div className={`${cell} w-[61px]`}>DT BP:</div>
      <div className={`${cell} w-[86px]`}>Purch Pwr:</div>
      <div className={`${cell} w-[95px]`}>Closed P/L:</div>
      <div className={`${cell} w-[59px]`}>RT TE:</div>
      <div className={`${cell} w-[82px]`}>Open P/L:</div>
      <div className={`${cell} w-[92px] text-[#1f8a1f] tracking-normal !pl-[6px]`}>ORDER BAR</div>
      <div className={`${cell} w-[86px] text-[#1f8a1f] tracking-normal relative !pl-[3px]`}>
        MACROS
        <span className="absolute right-[4px] top-[3px] w-[10px] h-[10px] rounded-full bg-[#e00000]" />
      </div>
      <div className={`${cell} flex-1`}>25/02/2022 16:45</div>
    </div>
  );
}

const menu = ['File', 'Edit', 'View', 'Insert', 'Format', 'Drawing', 'Window', 'Help'];
const menuW = ['w-[36px]', 'w-[40px]', 'w-[46px]', 'w-[50px]', 'w-[62px]', 'w-[69px]', 'w-[69px]', 'w-[40px]'];

export default function App() {
  return (
    <div className="w-[1920px] h-[1080px] flex flex-col overflow-hidden bg-[#f0f0f0] font-['Liberation_Sans',Arial,sans-serif]">
      <div className="h-[28px] shrink-0 flex items-center relative border-b border-[#333] bg-[linear-gradient(90deg,#b4c0cc_0%,#c2d3e6_22%,#aed2f6_50%,#a9d1f8_78%,#1e4a78_78.4%,#1c4775_92%,#31608c_100%)]">
        <svg viewBox="0 0 16 24" className="w-[16px] h-[24px] ml-[2px] shrink-0">
          <path d="M8 1C3 6 1 11 2 16c1 5 8 7 11 3 2-3 1-8-2-10 0 3-1 5-3 5-2-2 0-8 0-13z" fill="#1a50c8" />
          <path d="M7 8c-2 3-2 7 0 9 3 1 4-1 4-3-1 1-3 1-3-1z" fill="#90c0f8" />
        </svg>
        <span className="ml-[7px] text-[14.3px] text-black whitespace-pre font-['Noto_Sans','Liberation_Sans',sans-serif] tracking-[-0.15px]">
          TradeStation 8.1 - STOX_FIB - SITO Indici - [Chart Analysis - GS:FTSEMIB  120 min  [MCEDB] SPMIB FUTURES]
        </span>
        <div className="absolute right-[3px] top-0 h-[24px] flex rounded-b-[3px] overflow-hidden border border-t-0 border-[#e8eef4]/70">
          <div className="w-[37px] bg-[linear-gradient(180deg,#8ea2b6,#3a5a78)] flex items-end justify-center pb-[6px]"><div className="w-[16px] h-[4px] bg-white border border-[#444]/30" /></div>
          <div className="w-[36px] bg-[linear-gradient(180deg,#8ea2b6,#3a5a78)] border-l border-[#e8eef4]/50 flex items-center justify-center">
            <svg viewBox="0 0 18 18" className="w-[18px] h-[18px]"><path d="M5 4V1h12v12h-3" fill="none" stroke="#fff" strokeWidth="1.600" /><path d="M2 5h12v12H2z" fill="#3a5a78" stroke="#fff" strokeWidth="2" /><path d="M6 9h4v4H6z" fill="none" stroke="#fff" /></svg>
          </div>
          <div className="w-[63px] bg-[linear-gradient(180deg,#dd9a78_0%,#d08a68_45%,#c9401f_55%,#c64a2c_100%)] border-l border-[#e8eef4]/50 flex items-center justify-center text-white text-[24px] font-bold leading-none">X</div>
        </div>
      </div>

      <div className="h-[30px] shrink-0 flex items-center relative bg-[linear-gradient(180deg,#ffffff_0%,#f2f4fa_25%,#d6dbec_35%,#d4d9ea_100%)] border-b border-[#a8a8b0] pl-[7px]">
        <svg viewBox="0 0 19 18" className="w-[19px] h-[18px] shrink-0 mr-[9px]">
          <path d="M0 0h19v18H0z" fill="#111" />
          <path d="M1 12l3-4 2 2 3-6 2 5 3-3 3 4" fill="none" stroke="#18c030" />
          <path d="M1 15l5-1 5 1 6-1" fill="none" stroke="#d02020" />
          <path d="M0 0h19v2H0z" fill="#1848b0" />
        </svg>
        {menu.map((m, i) => (
          <span key={m} className={`${menuW[i]} shrink-0 text-[15px] text-black font-['Noto_Sans','Liberation_Sans',sans-serif] tracking-[-0.2px]`}>{m}</span>
        ))}
        <MiniButtons className="absolute right-0 top-[1px] h-[27px]" />
      </div>

      <Toolbar />
      <ChartWindow />

      <div className="h-[23px] shrink-0 flex items-center justify-between bg-[#f0f0f0] pl-[8px] pr-[9px]">
        <div className="w-0 h-0 border-t-[5px] border-b-[5px] border-r-[6px] border-t-transparent border-b-transparent border-r-[#555]" />
        <div className="flex items-center gap-[8px]">
          <div className="w-[18px] h-[18px] bg-[#e4e4e4] border border-[#a8a8a8] rounded-[2px] flex items-center justify-center text-[#555] text-[10px] leading-none">|||</div>
          <div className="w-0 h-0 border-t-[5px] border-b-[5px] border-l-[6px] border-t-transparent border-b-transparent border-l-[#555]" />
        </div>
      </div>

      <TabBar />
      <StatusBar />
      <div className="h-[2px] shrink-0 bg-[#34597e]" />
    </div>
  );
}
